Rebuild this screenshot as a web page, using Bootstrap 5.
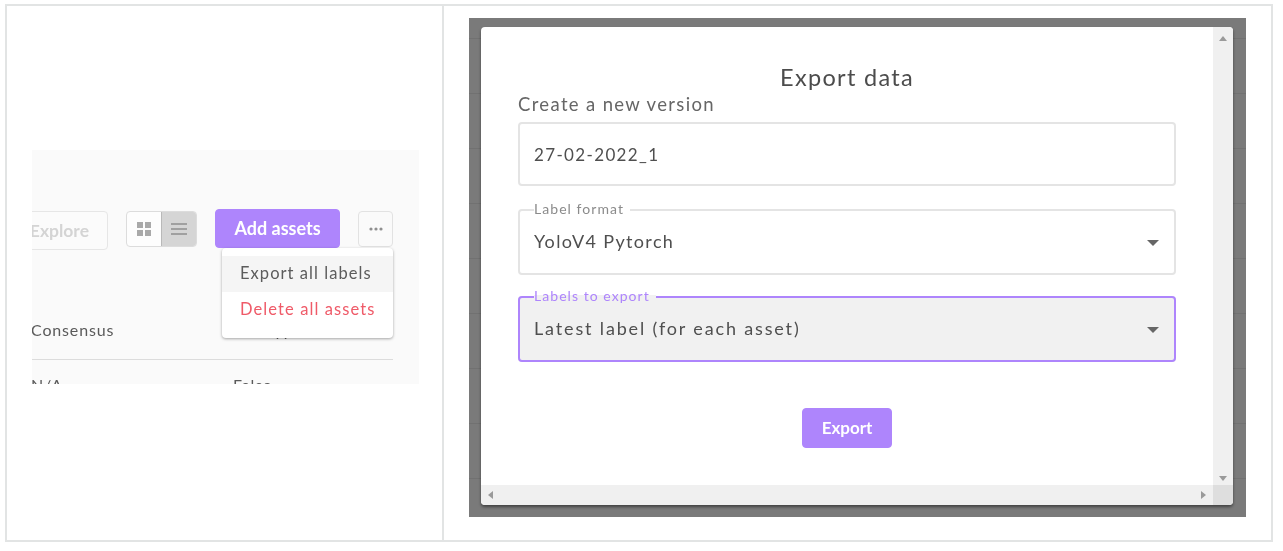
<!DOCTYPE html>
<html lang="en">
<head>
<meta charset="utf-8">
<title>Export data</title>
<link rel="stylesheet" href="https://cdn.jsdelivr.net/npm/bootstrap@5.3.0/dist/css/bootstrap.min.css">
<style>
html,body{height:551px;overflow:hidden;background:#fff}
body{font-family:"Lato","Liberation Sans",sans-serif;color:#555;padding:4px 10px 9px 5px}
.frame{height:538px;border:2px solid #e2e4e4}
.cell-a{width:437px;flex:none;padding-top:144px;padding-left:25px;border-right:2px solid #e2e4e4}
.cell-b{flex:1;padding:12px 25px 0}
.shot{width:387px;height:234px;background:#fafafa;overflow:hidden;padding-top:59px;filter:blur(.3px)}
.bar{padding-right:26px;gap:18px}
.bar>*{flex:none}
.btn-ghost{margin-top:2px;height:39px;width:100px;border:1px solid #e6e6e6;border-radius:4px;color:#d4d4d4;font-weight:700;font-size:17.5px;text-align:right;padding:6px 18px 0 0;background:#fbfbfb}
.toggle{margin-top:2px;height:36px;width:71px;border:1px solid #dcdcdc;border-radius:4px;overflow:hidden;background:#fdfdfd}
.toggle>span{flex:1}
.toggle>span+span{background:#d5d5d5;border-left:1px solid #b9b9b9}
.add-wrap{position:relative}
.add{width:125px;height:39px;background:#ae85fc;border-color:#ae85fc;color:#fff;font-weight:700;font-size:18px;padding:0;border-radius:4px;--bs-btn-hover-bg:#ae85fc}
.more{margin-top:2px;width:35px;height:36px;border:1px solid #e2e2e2;border-radius:4px}
.menu{position:absolute;top:39px;left:7px;width:171px;height:90px;padding:8px 0;margin:0;border:0;border-radius:4px;box-shadow:0 1px 3px rgba(0,0,0,.35);font-size:16.5px;z-index:2}
.menu .dropdown-item{height:36px;padding:0 0 2px 18px;display:flex;align-items:center;color:#5c5c5c;letter-spacing:1.05px}
.menu .dropdown-item.on{background:#f5f5f5}
.menu .dropdown-item.del{color:#ef5a68;letter-spacing:1.1px}
.rows{margin:0 26px 0 -1px;font-size:16px;color:#5a5a5a}
.tr{height:47px;padding-top:13px;letter-spacing:.85px}
.tr>span{width:202px;flex:none}
.head{margin-top:43px;height:67px;padding-top:25px;border-bottom:1px solid #dcdcdc}
.backdrop{height:499px;padding:9px 13px 12px 12px;background:#7a7a7a repeating-linear-gradient(180deg,#7a7a7a 0 20px,#717171 20px 21px,#7a7a7a 21px 55px);filter:blur(.3px)}
.dialog{height:478px;border-radius:4px;background:#fff;overflow:hidden;box-shadow:0 2px 3px rgba(0,0,0,.45);display:grid;grid-template-columns:1fr 20px;grid-template-rows:1fr 20px}
.pane{padding:36px 37px 0;color:#555}
.title{font-size:23.5px;line-height:28px;text-align:center;margin:0 0 1px;font-weight:400;letter-spacing:1.3px;color:#4c4c4c}
.cap{font-size:18.5px;line-height:24px;margin:0 0 6px;display:block;letter-spacing:1.35px;color:#666}
.box{height:64px;border:2px solid #e4e4e4;border-radius:4px;width:100%;padding:0 14px;font-size:17px;letter-spacing:1.35px;color:#4f4f4f;font-family:inherit;background:#fff;margin-bottom:17px}
.out{height:72px;border:2px solid #e4e4e4;border-radius:4px;padding:0 14px;margin:0 0 15px;position:relative;font-size:18px}
.out legend{float:none;width:auto;font-size:14px;line-height:13px;margin:0;padding:0 6px 0 0;color:#8b8b8b;letter-spacing:1.05px;transform:translateY(-1px)}
.out .val{line-height:24px;padding-top:13px;letter-spacing:1.35px;color:#4f4f4f}
.out.act{border-color:#ae85fc;background:#f1f1f1}
.out.act legend{color:#ae85fc;background:linear-gradient(180deg,#fff 50%,#f1f1f1 50%)}
.out.act .val{letter-spacing:1.85px}
.caret{position:absolute;right:15px;top:24px;width:0;height:0;border:6px solid transparent;border-top-color:#666;border-bottom:0}
.send{width:90px;height:40px;margin-top:31px;background:#ae85fc;border-color:#ae85fc;color:#fff;font-weight:700;font-size:17px;padding:0;border-radius:4px}
.sb-v{background:#f0f0f0;padding:9px 0 4px 0}
.sb-h{background:#f0f0f0;padding:0 7px}
.sb-c{background:#dedede}
.tri{width:0;height:0;border:4px solid transparent}
.t-u{border-bottom:5px solid #9a9a9a;border-top:0}
.t-d{border-top:5px solid #9a9a9a;border-bottom:0}
.t-l{border-right:5px solid #9a9a9a;border-left:0}
.t-r{border-left:5px solid #9a9a9a;border-right:0}
</style>
</head>
<body>
<div class="frame d-flex">
  <div class="cell-a">
    <div class="shot">
      <div class="bar d-flex justify-content-end align-items-start">
        <div class="btn-ghost">Explore</div>
        <div class="toggle d-flex">
          <span class="d-flex align-items-center justify-content-center">
            <svg width="14" height="14" viewBox="0 0 14 14" fill="#a9a9a9"><rect width="6" height="6"/><rect x="8" width="6" height="6"/><rect y="8" width="6" height="6"/><rect x="8" y="8" width="6" height="6"/></svg>
          </span>
          <span class="d-flex align-items-center justify-content-center">
            <svg width="16" height="12" viewBox="0 0 16 12" fill="#a0a0a0"><rect width="16" height="2"/><rect y="5" width="16" height="2"/><rect y="10" width="16" height="2"/></svg>
          </span>
        </div>
        <div class="add-wrap">
          <button class="btn add" type="button">Add assets</button>
          <ul class="dropdown-menu show menu">
            <li><a class="dropdown-item on" href="#">Export all labels</a></li>
            <li><a class="dropdown-item del" href="#">Delete all assets</a></li>
          </ul>
        </div>
        <div class="more d-flex align-items-center justify-content-center">
          <svg width="14" height="4" viewBox="0 0 14 4" fill="#8f8f8f"><circle cx="2" cy="2" r="1.6"/><circle cx="7" cy="2" r="1.6"/><circle cx="12" cy="2" r="1.6"/></svg>
        </div>
      </div>
      <div class="rows">
        <div class="tr head d-flex"><span>Consensus</span><span>Honeypot</span></div>
        <div class="tr d-flex"><span>N/A</span><span>False</span></div>
      </div>
    </div>
  </div>
  <div class="cell-b">
    <div class="backdrop">
      <div class="dialog">
        <div class="pane">
          <h2 class="title">Export data</h2>
          <label class="cap" for="ver">Create a new version</label>
          <input id="ver" class="box d-block" value="27-02-2022_1">
          <fieldset class="out">
            <legend>Label format</legend>
            <div class="val">YoloV4 Pytorch</div>
            <span class="caret"></span>
          </fieldset>
          <fieldset class="out act">
            <legend>Labels to export</legend>
            <div class="val">Latest label (for each asset)</div>
            <span class="caret"></span>
          </fieldset>
          <div class="text-center"><button class="btn send" type="button">Export</button></div>
        </div>
        <div class="sb-v d-flex flex-column justify-content-between align-items-center"><span class="tri t-u"></span><span class="tri t-d"></span></div>
        <div class="sb-h d-flex justify-content-between align-items-center"><span class="tri t-l"></span><span class="tri t-r"></span></div>
        <div class="sb-c"></div>
      </div>
    </div>
  </div>
</div>
</body>
</html>
